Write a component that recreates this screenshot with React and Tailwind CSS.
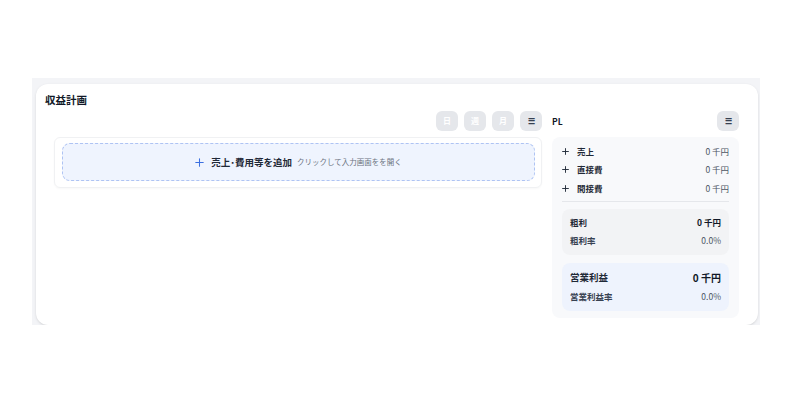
import React from "react";

const font = { fontFamily: '"Noto Sans CJK JP", "Noto Sans", sans-serif' };

function ToolButton({ label, active }) {
  return (
    <button
      className={`w-[22px] h-[20px] rounded-md bg-[#e5e7eb] flex items-center justify-center text-[8px] font-bold leading-none ${active ? "text-[#374151]" : "text-white"}`}
    >
      {label}
    </button>
  );
}

function Plus({ size, color, width }) {
  return (
    <svg width={size} height={size} viewBox="0 0 12 12" fill="none" stroke={color} strokeWidth={width} strokeLinecap="round">
      <path d="M6 1v10M1 6h10" />
    </svg>
  );
}

function PlRow({ label }) {
  return (
    <div className="flex items-center justify-between h-[18.5px]">
      <div className="flex items-center">
        <span className="w-[15px] flex items-center">
          <Plus size={7} color="#1f2937" width={1.6} />
        </span>
        <span className="text-[8.5px] font-bold text-[#1f2937]">{label}</span>
      </div>
      <span className="text-[8.5px] text-[#4b5563]">0 千円</span>
    </div>
  );
}

export default function App() {
  return (
    <div className="w-[800px] h-[400px] bg-white pt-[78px] pl-[32px]" style={font}>
      <div className="w-[728px] h-[247px] bg-[#f3f4f7] pt-[6px] pl-[4px] overflow-hidden">
        <div className="w-[722px] h-[241px] bg-white rounded-xl shadow-sm px-[9px] pt-[8px]">
          <h1 className="text-[10.5px] font-bold text-[#111827] leading-[16px]">収益計画</h1>
          <div className="flex mt-[3px]">
            <div className="w-[488px] ml-[9px] shrink-0">
              <div className="flex justify-end gap-[6px]">
                <ToolButton label="日" />
                <ToolButton label="週" />
                <ToolButton label="月" />
                <ToolButton label="☰" active />
              </div>
              <div className="mt-[6px] border border-[#f0f1f3] rounded-md shadow-[0_1px_2px_rgba(0,0,0,0.03)] pt-[5px] pb-[6px] pl-[7px] pr-[6px]">
                <div className="h-[38px] rounded-lg border border-dashed border-[#aec3f3] bg-[#eff4fe] flex items-center justify-center">
                  <span className="mr-[7px] flex items-center">
                    <Plus size={9} color="#3b6fe0" width={1.4} />
                  </span>
                  <span className="text-[9.5px] font-bold text-[#1f2937]">売上･費用等を追加</span>
                  <span className="text-[7.5px] text-[#6b7280] ml-[5px]">クリックして入力画面をを開く</span>
                </div>
              </div>
            </div>
            <div className="w-[187px] ml-[10px] shrink-0">
              <div className="flex items-center justify-between">
                <span className="text-[8.5px] font-bold text-[#111827]">PL</span>
                <ToolButton label="☰" active />
              </div>
              <div className="mt-[6px] h-[181px] bg-[#f8f9fb] rounded-lg px-[10px] pt-[5px]">
                <PlRow label="売上" />
                <PlRow label="直接費" />
                <PlRow label="間接費" />
                <div className="border-t border-[#e5e7eb] mt-[3px]" />
                <div className="mt-[7px] h-[46px] bg-[#f2f3f5] rounded-lg px-[8px] pt-[5px]">
                  <div className="flex justify-between items-center h-[18px]">
                    <span className="text-[8.5px] font-bold text-[#1f2937]">粗利</span>
                    <span className="text-[8.5px] font-bold text-[#111827]">0 千円</span>
                  </div>
                  <div className="flex justify-between items-center h-[18px]">
                    <span className="text-[8.5px] font-bold text-[#374151]">粗利率</span>
                    <span className="text-[8.5px] text-[#4b5563]">0.0%</span>
                  </div>
                </div>
                <div className="mt-[8px] h-[48px] bg-[#eef3fd] rounded-lg px-[8px] pt-[5px]">
                  <div className="flex justify-between items-center h-[20px]">
                    <span className="text-[9.5px] font-bold text-[#1f2937]">営業利益</span>
                    <span className="text-[10px] font-bold text-[#111827]">0 千円</span>
                  </div>
                  <div className="flex justify-between items-center h-[18px]">
                    <span className="text-[8.5px] font-bold text-[#374151]">営業利益率</span>
                    <span className="text-[8.5px] text-[#4b5563]">0.0%</span>
                  </div>
                </div>
              </div>
            </div>
          </div>
        </div>
      </div>
    </div>
  );
}
